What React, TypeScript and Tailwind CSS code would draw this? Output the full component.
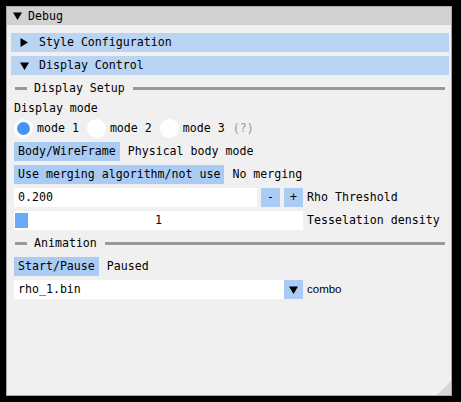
import React from "react";

const Down = ({ className = "" }: { className?: string }) => (
  <svg width="9" height="8" viewBox="0 0 9 8" className={className}>
    <polygon points="0,0.5 9,0.5 4.5,8" fill="#000" />
  </svg>
);
const Right = ({ className = "" }: { className?: string }) => (
  <svg width="8" height="9" viewBox="0 0 8 9" className={className}>
    <polygon points="0.5,0 8,4.5 0.5,9" fill="#000" />
  </svg>
);

const SepText = ({ label }: { label: string }) => (
  <div className="flex h-[19px] items-center">
    <div className="ml-[1px] h-[3px] w-[12px] bg-[#999999]" />
    <span className="ml-[7px] leading-[13px]">{label}</span>
    <div className="ml-[8px] mr-[-1px] h-[3px] flex-1 bg-[#999999]" />
  </div>
);

const Btn = ({ children, className = "" }: { children: React.ReactNode; className?: string }) => (
  <div className={`flex h-[19px] items-center bg-[#aaccf4] px-[4px] leading-[13px] ${className}`}>{children}</div>
);

const Radio = ({ label, on }: { label: string; on?: boolean }) => (
  <div className="flex items-center gap-[4px]">
    <div className="flex h-[19px] w-[19px] items-center justify-center rounded-full bg-white">
      {on && <div className="h-[13px] w-[13px] rounded-full bg-[#4296fa]" />}
    </div>
    <span className="leading-[13px]">{label}</span>
  </div>
);

export default function App() {
  return (
    <div className="h-[402px] w-[461px] bg-black p-[6px] font-['DejaVu_Sans_Mono',monospace] text-[11.6px] text-black">
      <div className="relative flex h-[390px] w-[446px] flex-col border border-[#a8a8a8] bg-[#f0f0f0]">
        <div className="flex h-[18px] items-center bg-[#d1d1d1]">
          <Down className="ml-[6px]" />
          <span className="ml-[6px] leading-[13px]">Debug</span>
        </div>
        <div className="flex flex-col gap-[4px] pl-[7px] pr-[7px] pt-[8px]">
          <div className="-ml-[3px] -mr-[5px] flex h-[19px] items-center bg-[#bad4f3]">
            <Right className="ml-[9px]" />
            <span className="ml-[11px] leading-[13px]">Style Configuration</span>
          </div>
          <div className="-ml-[3px] -mr-[5px] flex h-[19px] items-center bg-[#bad4f3]">
            <Down className="ml-[9px]" />
            <span className="ml-[10px] leading-[13px]">Display Control</span>
          </div>
          <SepText label="Display Setup" />
          <div className="h-[13px] leading-[13px]">Display mode</div>
          <div className="flex h-[19px] items-center gap-[8px]">
            <Radio label="mode 1" on />
            <Radio label="mode 2" />
            <Radio label="mode 3" />
            <span className="leading-[13px] text-[#999999]">(?)</span>
          </div>
          <div className="flex items-center gap-[8px]">
            <Btn>Body/WireFrame</Btn>
            <span className="leading-[13px]">Physical body mode</span>
          </div>
          <div className="flex items-center gap-[8px]">
            <Btn>Use merging algorithm/not use</Btn>
            <span className="leading-[13px]">No merging</span>
          </div>
          <div className="flex items-center gap-[4px]">
            <div className="flex h-[19px] w-[243px] items-center bg-white px-[4px] leading-[13px]">0.200</div>
            <Btn className="w-[19px] justify-center px-0">-</Btn>
            <Btn className="w-[19px] justify-center px-0">+</Btn>
            <span className="leading-[13px]">Rho Threshold</span>
          </div>
          <div className="flex items-center gap-[4px]">
            <div className="relative flex h-[19px] w-[289px] items-center justify-center bg-white leading-[13px]">
              <div className="absolute left-[1px] top-[2px] h-[15px] w-[13px] bg-[#68aaf8]" />
              <span className="relative">1</span>
            </div>
            <span className="leading-[13px]">Tesselation density</span>
          </div>
          <SepText label="Animation" />
          <div className="flex items-center gap-[8px]">
            <Btn>Start/Pause</Btn>
            <span className="leading-[13px]">Paused</span>
          </div>
          <div className="flex items-center gap-[4px]">
            <div className="flex h-[19px] w-[289px] items-center bg-white">
              <span className="flex-1 px-[4px] leading-[13px]">rho_1.bin</span>
              <div className="flex h-[19px] w-[19px] items-center justify-center bg-[#aaccf4]">
                <Down />
              </div>
            </div>
            <span className="font-['Liberation_Sans',sans-serif] text-[11.5px] leading-[13px]">combo</span>
          </div>
        </div>
        <svg width="14" height="14" viewBox="0 0 14 14" className="absolute bottom-0 right-0">
          <polygon points="14,0 14,14 0,14" fill="#d6d6d6" />
        </svg>
      </div>
    </div>
  );
}
